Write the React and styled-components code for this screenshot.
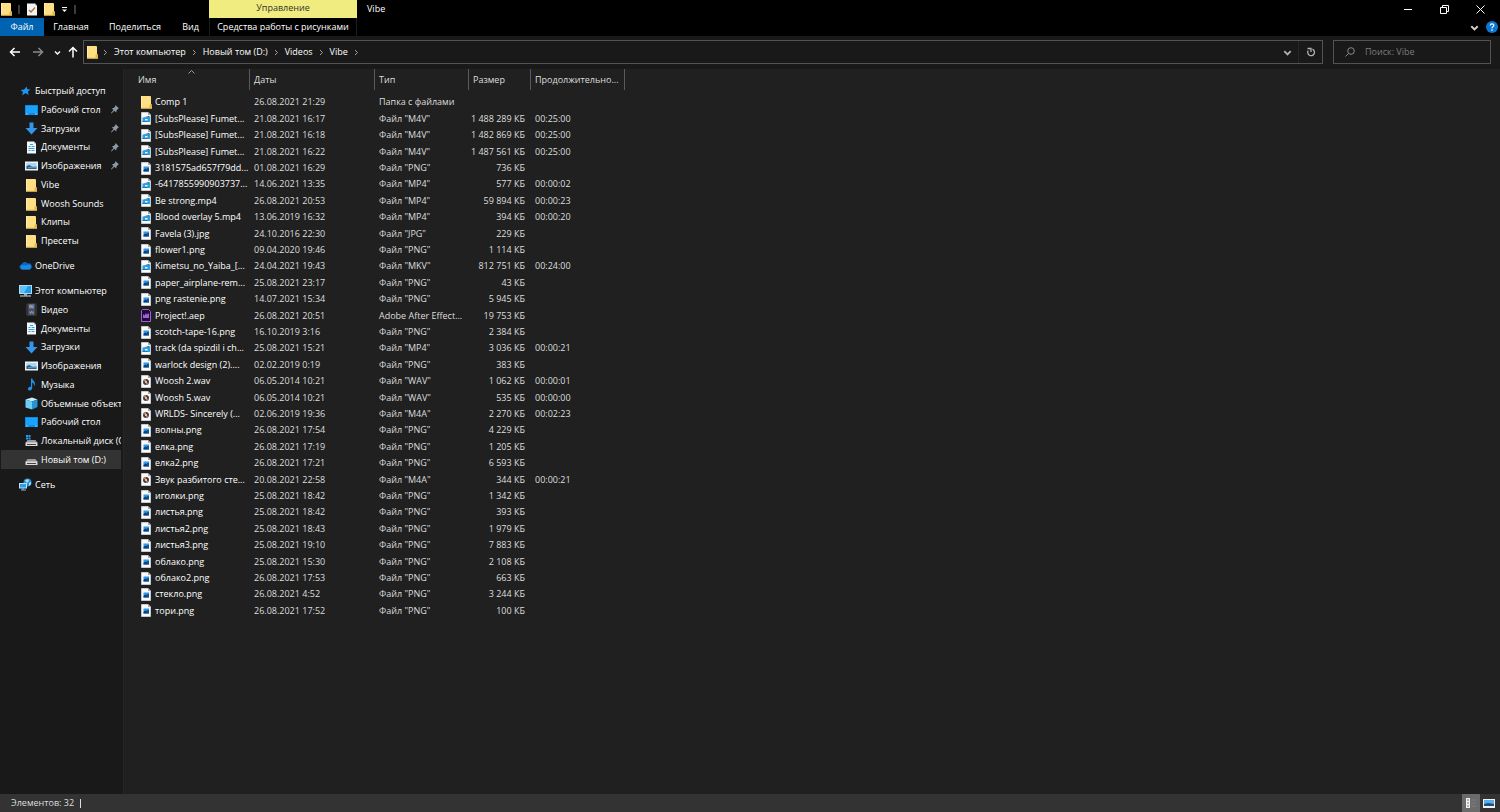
import { Fragment } from "react";
import styled, { createGlobalStyle, css } from "styled-components";

const GlobalStyle = createGlobalStyle`
  * {
    box-sizing: border-box;
  }

  body {
    margin: 0;
    background-color: #202020;
    color: #fff;
    font-family: "Open Sans", "Noto Sans", sans-serif;
    font-size: 9px;
    line-height: 16px;
  }

  button,
  input {
    margin: 0;
    padding: 0;
    border: 0;
    background: none;
    color: inherit;
    font: inherit;
  }

  svg {
    display: block;
    flex: none;
  }
`;

const Window = styled.div`
  display: flex;
  flex-direction: column;
  min-height: 100vh;
`;

const TitleBar = styled.header`
  display: flex;
  height: 18px;
  padding-right: 2px;
  background-color: #000;
`;

const QuickBar = styled.div`
  display: flex;
  align-items: center;
  gap: 5px;
  width: 209px;
  padding-left: 1px;
`;

const IconButton = styled.button`
  display: flex;
  align-items: center;
  justify-content: center;
  width: ${(props) => props.$width || 12}px;
  height: 18px;
  color: ${(props) => props.$color || "#fff"};
`;

const QuickDivider = styled.span`
  width: 2px;
  height: 9px;
  margin: 0 1px;
  background-color: #3c3c3c;
`;

const ContextTitle = styled.div`
  width: 148px;
  background-color: #f0ec80;
  color: #33322a;
  line-height: 16px;
  text-align: center;
`;

const WindowTitle = styled.h1`
  flex: 1;
  margin: 0;
  padding-left: 10px;
  font-size: 9px;
  font-weight: 400;
  line-height: 18px;
`;

const Ribbon = styled.nav`
  display: flex;
  align-items: center;
  height: 18px;
  background-color: #000;
`;

const RibbonTab = styled.button`
  width: ${(props) => props.$width}px;
  height: 18px;
  white-space: nowrap;
  background-color: ${(props) => (props.$active ? "#0063b1" : "transparent")};
  ${(props) =>
    props.$context &&
    css`
      border-right: 1px solid #1c1c1c;
      border-left: 1px solid #1c1c1c;
    `}
`;

const Spacer = styled.div`
  flex: 1;
`;

const NavBar = styled.div`
  display: flex;
  align-items: center;
  height: 33px;
  padding: 0 9px 1px 5px;
  background-color: #191919;
`;

const AddressBar = styled.div`
  display: flex;
  flex: 1;
  align-items: center;
  height: 24px;
  margin-left: 1px;
  padding-left: 3px;
  border: 1px solid #535353;
`;

const Crumb = styled.a`
  margin-left: 5px;
  color: #fff;
  text-decoration: none;
  white-space: nowrap;
`;

const CrumbArrow = styled.span`
  display: flex;
  margin-left: ${(props) => (props.$first ? 4 : 5)}px;
  color: #a0a0a0;
`;

const RefreshBox = styled.div`
  display: flex;
  align-items: center;
  height: 22px;
  border-left: 1px solid #262626;
`;

const SearchBox = styled.label`
  display: flex;
  align-items: center;
  gap: 10px;
  width: 158px;
  height: 24px;
  margin-left: 10px;
  padding-left: 11px;
  border: 1px solid #535353;
  color: #8a8a8a;
`;

const SearchInput = styled.input`
  flex: 1;
  min-width: 0;
  outline: none;

  &::placeholder {
    color: #7c7c7c;
    opacity: 1;
  }
`;

const Body = styled.div`
  display: flex;
  flex: 1;
`;

const Sidebar = styled.aside`
  width: 124px;
  padding-top: 12px;
  border-right: 1px solid #262626;
  background-color: #191919;
`;

const TreeGroup = styled.ul`
  margin: 0 0 6px;
  padding: 0;
  list-style: none;
`;

const TreeItem = styled.li`
  height: 19px;

  &:nth-child(4n) {
    height: 18px;
  }
`;

const TreeLink = styled.a`
  display: flex;
  align-items: center;
  gap: 3px;
  height: 100%;
  margin: 0 2px 0 1px;
  padding-left: ${(props) => (props.$root ? 18 : 24)}px;
  overflow: hidden;
  background-color: ${(props) => (props.$selected ? "#333" : "transparent")};
  color: #fff;
  text-decoration: none;
  white-space: nowrap;
`;

const IconSlot = styled.span`
  display: flex;
  flex: none;
  justify-content: center;
  width: ${(props) => props.$width}px;
`;

const TreeLabel = styled.span`
  flex: 1;
`;

const PinSlot = styled.span`
  padding-right: 2px;
`;

const Main = styled.main`
  flex: 1;
`;

const FileTable = styled.table`
  width: 501px;
  border-collapse: separate;
  border-spacing: 0;
  table-layout: fixed;
`;

const HeadCell = styled.th`
  position: relative;
  width: ${(props) => props.$width}px;
  height: 21px;
  padding: 0 0 0 ${(props) => (props.$first ? 14 : 4)}px;
  border-right: 1px solid #5a5a5a;
  color: #dedede;
  font-weight: 400;
  text-align: left;
  white-space: nowrap;
`;

const SortMark = styled.span`
  position: absolute;
  top: 0;
  left: 64px;
  color: #9a9a9a;
`;

const Rows = styled.tbody`
  &::before {
    content: "";
    display: table-row;
    height: 4px;
  }
`;

const Row = styled.tr`
  height: 16px;

  &:nth-child(5n + 2),
  &:nth-child(5n + 4) {
    height: 17px;
  }
`;

const Cell = styled.td`
  padding: 0 4px;
  color: #dedede;
  line-height: 16px;
  white-space: nowrap;
`;

const SizeCell = styled(Cell)`
  padding: 0 6px 0 0;
  text-align: right;
`;

const NameCell = styled(Cell)`
  padding: 0 0 0 16px;
  color: #fff;
`;

const FileName = styled.div`
  display: flex;
  align-items: center;
  gap: 3px;
`;

const StatusBar = styled.footer`
  display: flex;
  align-items: center;
  height: 18px;
  padding: 0 2px 0 11px;
  background-color: #333;
  color: #dedede;
`;

const StatusDivider = styled.span`
  width: 1px;
  height: 9px;
  margin-left: 6px;
  background-color: #dedede;
`;

const ViewButton = styled(IconButton)`
  width: 18px;
  background-color: ${(props) => (props.$selected ? "#6b6b6b" : "transparent")};
`;

const FolderIcon = () => (
  <svg width="11" height="14" viewBox="0 0 11 14">
    <path d="M0 1h9.500l.5 1v7l1 1v3.500H0z" fill="#ffdf83" />
    <path d="M0 1h1v12H0z" fill="#ffeeb0" />
    <path d="M8.500 9.500h2.500V13H8.500z" fill="#e3b341" />
    <path d="M0 12.500h11v1H0z" fill="#f0c75e" />
  </svg>
);

const PropertiesIcon = () => (
  <svg width="10" height="13" viewBox="0 0 10 13">
    <path d="M0 .5h8l2 2v10H0z" fill="#f4f4f4" />
    <path d="M8 .5v2h2z" fill="#b5b5b5" />
    <path d="M2 7l2 2 4-4.500" fill="none" stroke="#b0703d" strokeWidth="1.300" />
  </svg>
);

const Sheet = ({ children }) => (
  <svg width="10" height="13" viewBox="0 0 10 13">
    <path d="M.5.500h6.500l2.500 2.500v9.500h-9z" fill="#fafafa" stroke="#c9c9c9" />
    <path d="M7 0v3h3z" fill="#a8a8a8" />
    {children}
  </svg>
);

const fileIcons = {
  folder: <FolderIcon />,
  image: (
    <Sheet>
      <path d="M2.500 4.500h5.500v5H2.500z" fill="#2f9be8" />
      <path d="M2.500 9.500V8l2-1.500 3.500 2v1z" fill="#0b3c78" />
      <path d="M6 6h2v3H6z" fill="#14518f" />
    </Sheet>
  ),
  video: (
    <Sheet>
      <path d="M1.500 5.500h5l2.500-1.500v6H1.500z" fill="#2ba0e0" />
      <path d="M2 5.500L8 4v1.500z" fill="#0c68b8" />
      <path d="M4 7h2.500v1.500H4z" fill="#e8f6fd" />
      <path d="M1.500 9h5v1h-5z" fill="#1478c4" />
    </Sheet>
  ),
  audio: (
    <Sheet>
      <circle cx="5" cy="7" r="3" fill="#4a3838" />
      <path d="M2.200 6.500A3 3 0 0 1 5 4v2z" fill="#d08850" />
      <path d="M7.800 7.500A3 3 0 0 1 5 10V8z" fill="#8a7a9a" />
      <circle cx="5" cy="7" r="1.100" fill="#f3e8d8" />
    </Sheet>
  ),
  project: (
    <svg width="10" height="13" viewBox="0 0 10 13">
      <path d="M.5 1.500l1-1h6l2 2v10h-9z" fill="#23083d" stroke="#9a63d0" />
      <path d="M2 9V5l1.500 1.500L5 4l1 2 1-2 1 1v4z" fill="#9a63d0" />
    </svg>
  ),
};

const StarIcon = () => (
  <svg width="13" height="12" viewBox="0 0 13 12">
    <path
      d="M7.500 1.500l.8 2.800 3.200.2-2.700 2 .9 3.500-3.200-2-3.300 2.500.8-3.500-2.500-2 3.800-.5z"
      fill="#2196ee"
    />
  </svg>
);

const DesktopIcon = () => (
  <svg width="13" height="10" viewBox="0 0 13 10">
    <path d="M0 0h13v10H0z" fill="#0f8be6" />
    <path d="M1 1h11v7H1z" fill="#18a4fb" />
    <path d="M1 9h2M10 9h2" stroke="#8fd0ff" />
  </svg>
);

const DownloadIcon = () => (
  <svg width="13" height="13" viewBox="0 0 13 13">
    <path d="M4.500.5h4V6h4l-6 6.500L.5 6h4z" fill="#3695e8" />
  </svg>
);

const DocumentIcon = () => (
  <svg width="13" height="13" viewBox="0 0 13 13">
    <path d="M2 .5h7l2 2v10H2z" fill="#f4f6f8" />
    <path d="M9 .5v2h2z" fill="#aab4bd" />
    <path d="M5 3.500h3M3.500 5.500h2M6.500 5.500h3M3.500 7.500h6M3.500 9.500h2M6.500 9.500h3" stroke="#3aa0dd" />
  </svg>
);

const PictureIcon = () => (
  <svg width="13" height="10" viewBox="0 0 13 10">
    <path d="M0 .5h13v9H0z" fill="#eef2f5" />
    <path d="M1.500 2h10v6h-10z" fill="#a9d6f5" />
    <path d="M1.500 8V5l3-1 3 2 4-.5V8z" fill="#2d6288" />
    <path d="M3 7l4-1 4.500.500" stroke="#6fa3c4" fill="none" />
  </svg>
);

const CloudIcon = () => (
  <svg width="13" height="9" viewBox="0 0 13 9">
    <path d="M3 8.500a2.700 2.700 0 0 1-.5-5.300A3.800 3.800 0 0 1 9 2.500a3 3 0 0 1 1.500 6z" fill="#0a66c2" />
    <path d="M3 8.500a2.500 2.500 0 0 1 0-4.500l3.500.5 3-1a2.600 2.600 0 0 1 1 5z" fill="#1d88e0" />
  </svg>
);

const ComputerIcon = () => (
  <svg width="13" height="12" viewBox="0 0 13 12">
    <path d="M0 0h13v9H0z" fill="#b9d7ea" />
    <path d="M1 1h11v7H1z" fill="#1d9df0" />
    <path d="M1 1h8L5 8H1z" fill="#62c3fa" />
    <path d="M5 9h3v1.500H5z" fill="#8fa6b5" />
    <path d="M1 10.500h11v1H1z" fill="#cfe0ea" />
  </svg>
);

const FilmIcon = () => (
  <svg width="13" height="13" viewBox="0 0 13 13">
    <path d="M1.500.5h10v12h-10z" fill="#4a4a4e" />
    <path d="M2.500 .500v12M10.500 .500v12" stroke="#17171a" strokeDasharray="1 1" />
    <path d="M4 1.500h5v4H4z" fill="#5f86c8" />
    <path d="M4 7.500h5v4H4z" fill="#42669f" />
    <path d="M4 4l2-1.500L7.500 5M5 10l2-1.500 1.500 2" fill="none" stroke="#d99a4e" />
  </svg>
);

const MusicIcon = () => (
  <svg width="13" height="13" viewBox="0 0 13 13">
    <path d="M6 .5h1.200c.3 2 3 2.500 2.800 5.500-.1 1-.6 1.700-1 2 .3-2-.4-3-1.800-3.500V10c0 1.500-1.200 2.500-2.600 2.500S2.500 11.600 3 10.300s1.900-1.800 3-1.500z" fill="#1e90f0" />
  </svg>
);

const CubeIcon = () => (
  <svg width="13" height="13" viewBox="0 0 13 13">
    <path d="M.5 2.500L7 .5l5.500 2-5.500 2z" fill="#c5ecfb" />
    <path d="M.5 2.500l6.500 2v8l-6.500-2z" fill="#6fcdf3" />
    <path d="M12.500 2.500L7 4.500v8l5.500-2.500z" fill="#2494d6" />
  </svg>
);

const DriveIcon = ({ system }) => (
  <svg width="13" height="13" viewBox="0 0 13 13">
    {system && <path d="M1 1h2v2H1zM3.500 1h2v2h-2zM1 3.500h2v2H1zM3.500 3.500h2v2h-2z" fill="#1fa3f5" />}
    <path d="M2.500 6h8l2 3H.5z" fill="#9a9a9a" />
    <path d="M.5 8.500h12v3.500H.5z" fill="#dcdcdc" />
    <path d="M2 10.500h9" stroke="#444" />
  </svg>
);

const NetworkIcon = () => (
  <svg width="13" height="13" viewBox="0 0 13 13">
    <circle cx="8.500" cy="4.500" r="4" fill="#2e8fd0" />
    <path d="M6 2.500l3-1.500 1 2-2 2zM10 5l2-1v2l-2 2z" fill="#a6dbf4" />
    <path d="M0 5h8v5.500H0z" fill="#c3deee" />
    <path d="M1 6h6v3.500H1z" fill="#26a0ee" />
    <path d="M2 12h5M4 10v2" stroke="#8fb7d0" />
  </svg>
);

const PinIcon = () => (
  <svg width="8" height="9" viewBox="0 0 8 9">
    <path d="M4.500 0L8 3.500l-1 .3-1.500 1.700-.3 2L3.300 5.800.5 8.500 0 8l2.500-3L.8 3.200l2-.2L4.300 1.200z" fill="#8d9aa5" />
  </svg>
);

const Chevron = ({ size = 7, direction = "down", width = 1 }) => {
  const paths = {
    down: "M1 2.500l2.500 2.500L6 2.500",
    up: "M.5 4.500l3-3 3 3",
    right: "M2 1l2.500 2.500L2 6",
  };
  return (
    <svg width={size} height={size} viewBox="0 0 7 7">
      <path d={paths[direction]} fill="none" stroke="currentColor" strokeWidth={width} />
    </svg>
  );
};

const Arrow = ({ path }) => (
  <svg width="12" height="12" viewBox="0 0 12 12">
    <path d={path} fill="none" stroke="currentColor" strokeWidth="1.500" />
  </svg>
);

const crumbs = ["Этот компьютер", "Новый том (D:)", "Videos", "Vibe"];

const ribbonTabs = [
  { label: "Файл", width: 44, active: true },
  { label: "Главная", width: 54 },
  { label: "Поделиться", width: 74 },
  { label: "Вид", width: 37 },
  { label: "Средства работы с рисунками", width: 148, context: true },
];

const tree = [
  [
    { label: "Быстрый доступ", icon: <StarIcon />, root: true },
    { label: "Рабочий стол", icon: <DesktopIcon />, pinned: true },
    { label: "Загрузки", icon: <DownloadIcon />, pinned: true },
    { label: "Документы", icon: <DocumentIcon />, pinned: true },
    { label: "Изображения", icon: <PictureIcon />, pinned: true },
    { label: "Vibe", icon: <FolderIcon /> },
    { label: "Woosh Sounds", icon: <FolderIcon /> },
    { label: "Клипы", icon: <FolderIcon /> },
    { label: "Пресеты", icon: <FolderIcon /> },
  ],
  [{ label: "OneDrive", icon: <CloudIcon />, root: true }],
  [
    { label: "Этот компьютер", icon: <ComputerIcon />, root: true },
    { label: "Видео", icon: <FilmIcon /> },
    { label: "Документы", icon: <DocumentIcon /> },
    { label: "Загрузки", icon: <DownloadIcon /> },
    { label: "Изображения", icon: <PictureIcon /> },
    { label: "Музыка", icon: <MusicIcon /> },
    { label: "Объемные объекты", icon: <CubeIcon /> },
    { label: "Рабочий стол", icon: <DesktopIcon /> },
    { label: "Локальный диск (C:)", icon: <DriveIcon system /> },
    { label: "Новый том (D:)", icon: <DriveIcon />, selected: true },
  ],
  [{ label: "Сеть", icon: <NetworkIcon />, root: true }],
];

const columns = [
  { label: "Имя", width: 126 },
  { label: "Даты", width: 125 },
  { label: "Тип", width: 94 },
  { label: "Размер", width: 62 },
  { label: "Продолжительно...", width: 94 },
];

const files = [
  ["folder", "Comp 1", "26.08.2021 21:29", "Папка с файлами", "", ""],
  ["video", "[SubsPlease] Fumet...", "21.08.2021 16:17", 'Файл "M4V"', "1 488 289 КБ", "00:25:00"],
  ["video", "[SubsPlease] Fumet...", "21.08.2021 16:18", 'Файл "M4V"', "1 482 869 КБ", "00:25:00"],
  ["video", "[SubsPlease] Fumet...", "21.08.2021 16:22", 'Файл "M4V"', "1 487 561 КБ", "00:25:00"],
  ["image", "3181575ad657f79dd...", "01.08.2021 16:29", 'Файл "PNG"', "736 КБ", ""],
  ["video", "-6417855990903737...", "14.06.2021 13:35", 'Файл "MP4"', "577 КБ", "00:00:02"],
  ["video", "Be strong.mp4", "26.08.2021 20:53", 'Файл "MP4"', "59 894 КБ", "00:00:23"],
  ["video", "Blood overlay 5.mp4", "13.06.2019 16:32", 'Файл "MP4"', "394 КБ", "00:00:20"],
  ["image", "Favela (3).jpg", "24.10.2016 22:30", 'Файл "JPG"', "229 КБ", ""],
  ["image", "flower1.png", "09.04.2020 19:46", 'Файл "PNG"', "1 114 КБ", ""],
  ["video", "Kimetsu_no_Yaiba_[...", "24.04.2021 19:43", 'Файл "MKV"', "812 751 КБ", "00:24:00"],
  ["image", "paper_airplane-rem...", "25.08.2021 23:17", 'Файл "PNG"', "43 КБ", ""],
  ["image", "png rastenie.png", "14.07.2021 15:34", 'Файл "PNG"', "5 945 КБ", ""],
  ["project", "Project!.aep", "26.08.2021 20:51", "Adobe After Effect...", "19 753 КБ", ""],
  ["image", "scotch-tape-16.png", "16.10.2019 3:16", 'Файл "PNG"', "2 384 КБ", ""],
  ["video", "track (da spizdil i ch...", "25.08.2021 15:21", 'Файл "MP4"', "3 036 КБ", "00:00:21"],
  ["image", "warlock design (2)....", "02.02.2019 0:19", 'Файл "PNG"', "383 КБ", ""],
  ["audio", "Woosh 2.wav", "06.05.2014 10:21", 'Файл "WAV"', "1 062 КБ", "00:00:01"],
  ["audio", "Woosh 5.wav", "06.05.2014 10:21", 'Файл "WAV"', "535 КБ", "00:00:00"],
  ["audio", "WRLDS- Sincerely (...", "02.06.2019 19:36", 'Файл "M4A"', "2 270 КБ", "00:02:23"],
  ["image", "волны.png", "26.08.2021 17:54", 'Файл "PNG"', "4 229 КБ", ""],
  ["image", "елка.png", "26.08.2021 17:19", 'Файл "PNG"', "1 205 КБ", ""],
  ["image", "елка2.png", "26.08.2021 17:21", 'Файл "PNG"', "6 593 КБ", ""],
  ["audio", "Звук разбитого сте...", "20.08.2021 22:58", 'Файл "M4A"', "344 КБ", "00:00:21"],
  ["image", "иголки.png", "25.08.2021 18:42", 'Файл "PNG"', "1 342 КБ", ""],
  ["image", "листья.png", "25.08.2021 18:42", 'Файл "PNG"', "393 КБ", ""],
  ["image", "листья2.png", "25.08.2021 18:43", 'Файл "PNG"', "1 979 КБ", ""],
  ["image", "листья3.png", "25.08.2021 19:10", 'Файл "PNG"', "7 883 КБ", ""],
  ["image", "облако.png", "25.08.2021 15:30", 'Файл "PNG"', "2 108 КБ", ""],
  ["image", "облако2.png", "26.08.2021 17:53", 'Файл "PNG"', "663 КБ", ""],
  ["image", "стекло.png", "26.08.2021 4:52", 'Файл "PNG"', "3 244 КБ", ""],
  ["image", "тори.png", "26.08.2021 17:52", 'Файл "PNG"', "100 КБ", ""],
];

function Header() {
  return (
    <>
      <TitleBar>
        <QuickBar>
          <FolderIcon />
          <QuickDivider />
          <IconButton aria-label="Свойства">
            <PropertiesIcon />
          </IconButton>
          <IconButton aria-label="Новая папка">
            <FolderIcon />
          </IconButton>
          <IconButton $width={8} aria-label="Настройка панели">
            <svg width="7" height="7" viewBox="0 0 7 7">
              <path d="M1 1.500h5" stroke="#fff" />
              <path d="M1 3.500h5L3.500 6z" fill="#fff" />
            </svg>
          </IconButton>
          <QuickDivider />
        </QuickBar>
        <ContextTitle>Управление</ContextTitle>
        <WindowTitle>Vibe</WindowTitle>
        <IconButton $width={36} aria-label="Свернуть">
          <svg width="9" height="9" viewBox="0 0 9 9">
            <path d="M0 4.500h8" stroke="#fff" />
          </svg>
        </IconButton>
        <IconButton $width={36} aria-label="Развернуть">
          <svg width="9" height="9" viewBox="0 0 9 9">
            <path d="M.5 2.500h6v6h-6zM2.500 2.500v-2h6v6h-2" fill="none" stroke="#fff" />
          </svg>
        </IconButton>
        <IconButton $width={36} aria-label="Закрыть">
          <svg width="9" height="9" viewBox="0 0 9 9">
            <path d="M.5.500l8 8M8.500.500l-8 8" stroke="#fff" />
          </svg>
        </IconButton>
      </TitleBar>
      <Ribbon>
        {ribbonTabs.map((tab) => (
          <RibbonTab key={tab.label} $width={tab.width} $active={tab.active} $context={tab.context}>
            {tab.label}
          </RibbonTab>
        ))}
        <Spacer />
        <IconButton $width={18} $color="#d0d0d0" aria-label="Развернуть ленту">
          <Chevron size={9} width={1.5} />
        </IconButton>
        <IconButton $width={17} aria-label="Справка">
          <svg width="12" height="12" viewBox="0 0 12 12">
            <circle cx="6" cy="6" r="6" fill="#0a78d4" />
            <path d="M4.300 4.500c0-2.300 3.500-2.200 3.500-.2C7.800 5.600 6 5.700 6 7.300" fill="none" stroke="#fff" strokeWidth="1.200" />
            <circle cx="6" cy="9.100" r=".8" fill="#fff" />
          </svg>
        </IconButton>
      </Ribbon>
    </>
  );
}

function Navigation() {
  return (
    <NavBar>
      <IconButton $width={20} aria-label="Назад">
        <Arrow path="M11 6H1.500M5.500 2l-4 4 4 4" />
      </IconButton>
      <IconButton $width={26} $color="#8a8a8a" aria-label="Вперед">
        <Arrow path="M1 6h9.500M6.500 2l4 4-4 4" />
      </IconButton>
      <IconButton $width={12} aria-label="Последние расположения">
        <Chevron width={1.4} />
      </IconButton>
      <IconButton $width={19} aria-label="Вверх">
        <Arrow path="M6 11.500V1.500M2 5.500l4-4 4 4" />
      </IconButton>
      <AddressBar>
        <FolderIcon />
        <CrumbArrow $first>
          <Chevron direction="right" />
        </CrumbArrow>
        {crumbs.map((crumb) => (
          <Fragment key={crumb}>
            <Crumb href="#">{crumb}</Crumb>
            <CrumbArrow>
              <Chevron direction="right" />
            </CrumbArrow>
          </Fragment>
        ))}
        <Spacer />
        <IconButton $width={22} $color="#b0b0b0" aria-label="Предыдущие расположения">
          <Chevron size={9} width={1.4} />
        </IconButton>
        <RefreshBox>
          <IconButton $width={23} $color="#b0b0b0" aria-label="Обновить">
            <svg width="10" height="10" viewBox="0 0 10 10">
              <path d="M6.500 2.200A3.400 3.400 0 1 1 2.200 3.500" fill="none" stroke="currentColor" strokeWidth="1.300" />
              <path d="M1.500 1.500h3.500v3.500" fill="none" stroke="currentColor" strokeWidth="1.300" />
            </svg>
          </IconButton>
        </RefreshBox>
      </AddressBar>
      <SearchBox>
        <svg width="10" height="10" viewBox="0 0 10 10">
          <circle cx="6" cy="4" r="3.300" fill="none" stroke="currentColor" />
          <path d="M3.600 6.400L.5 9.500" stroke="currentColor" />
        </svg>
        <SearchInput type="text" placeholder="Поиск: Vibe" aria-label="Поиск: Vibe" />
      </SearchBox>
    </NavBar>
  );
}

function App() {
  return (
    <>
      <GlobalStyle />
      <Window>
        <Header />
        <Navigation />
        <Body>
          <Sidebar>
            {tree.map((group) => (
              <TreeGroup key={group[0].label}>
                {group.map((item) => (
                  <TreeItem key={item.label}>
                    <TreeLink href="#" $root={item.root} $selected={item.selected}>
                      <IconSlot $width={13}>{item.icon}</IconSlot>
                      <TreeLabel>{item.label}</TreeLabel>
                      {item.pinned && (
                        <PinSlot>
                          <PinIcon />
                        </PinSlot>
                      )}
                    </TreeLink>
                  </TreeItem>
                ))}
              </TreeGroup>
            ))}
          </Sidebar>
          <Main>
            <FileTable>
              <thead>
                <tr>
                  {columns.map((column, index) => (
                    <HeadCell key={column.label} $width={column.width} $first={index === 0}>
                      <button>{column.label}</button>
                      {index === 0 && (
                        <SortMark>
                          <Chevron direction="up" />
                        </SortMark>
                      )}
                    </HeadCell>
                  ))}
                </tr>
              </thead>
              <Rows>
                {files.map(([icon, name, date, type, size, length]) => (
                  <Row key={name + date}>
                    <NameCell>
                      <FileName>
                        <IconSlot $width={12}>{fileIcons[icon]}</IconSlot>
                        {name}
                      </FileName>
                    </NameCell>
                    <Cell>{date}</Cell>
                    <Cell>{type}</Cell>
                    <SizeCell>{size}</SizeCell>
                    <Cell>{length}</Cell>
                  </Row>
                ))}
              </Rows>
            </FileTable>
          </Main>
        </Body>
        <StatusBar>
          <span>Элементов: 32</span>
          <StatusDivider />
          <Spacer />
          <ViewButton $selected aria-label="Таблица">
            <svg width="12" height="12" viewBox="0 0 12 12">
              <path d="M1 1h4v10H1z" fill="#f2f2f2" />
              <path d="M2 3h2M2 6h2M2 9h2" stroke="#777" />
              <path d="M6 3h5M6 6h5M6 9h5" stroke="#7f7f7f" />
            </svg>
          </ViewButton>
          <ViewButton aria-label="Крупные значки">
            <svg width="12" height="9" viewBox="0 0 12 9">
              <path d="M0 0h12v9H0z" fill="#f2f2f2" />
              <path d="M1 1h10v6H1z" fill="#5ab0ea" />
              <path d="M1 7V5l4-1 6 1v2z" fill="#1f4f7a" />
            </svg>
          </ViewButton>
        </StatusBar>
      </Window>
    </>
  );
}

export default App;
